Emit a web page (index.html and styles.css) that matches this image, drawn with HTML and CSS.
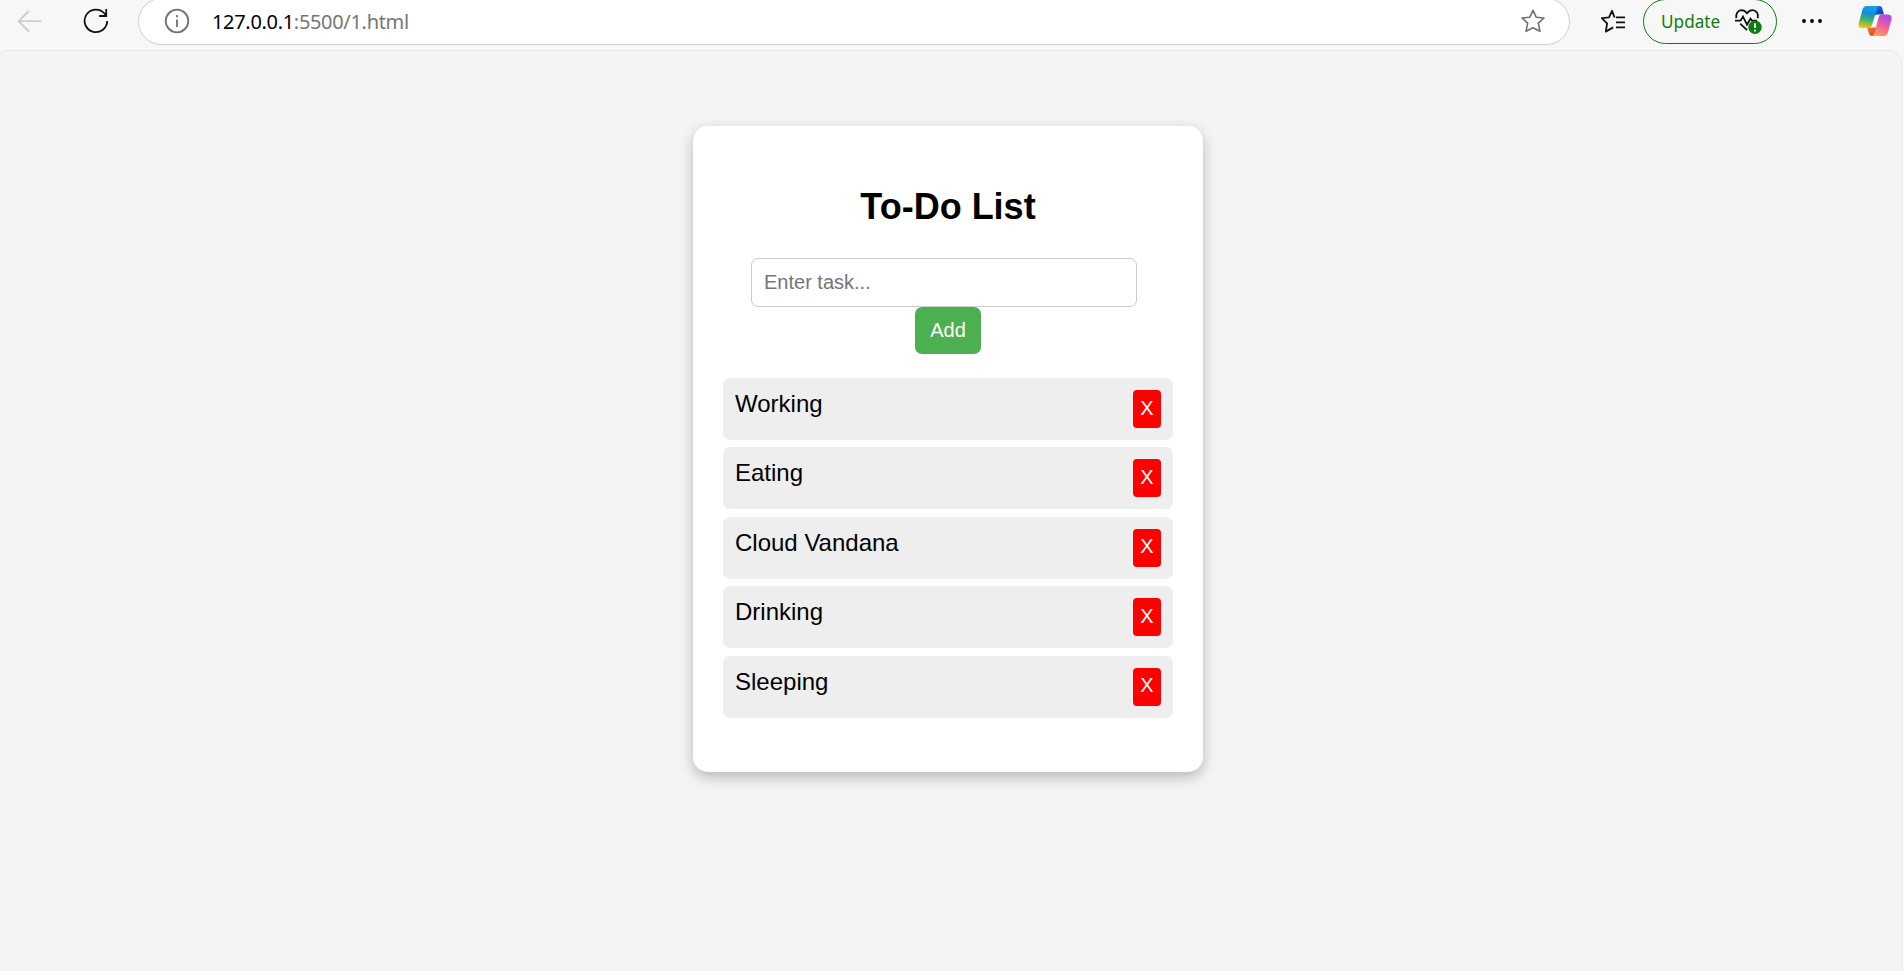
FILE: index.html
```html
<!DOCTYPE html>
<html lang="en">
<head>
<meta charset="utf-8">
<title>To-Do List</title>
<link rel="stylesheet" href="styles.css">
</head>
<body>
<header class="toolbar">
  <svg class="icon back" width="26" height="24" viewBox="0 0 26 24"><path d="M24.5 12.2H1.5M12 2 1.5 12.2 12 22.5"/></svg>
  <svg class="icon reload" width="26" height="26" viewBox="0 0 26 26"><path d="M24.2 13A11.3 11.3 0 1 1 21.5 5.5L23 7.6M23.2 1v7h-7"/></svg>
  <div class="address">
    <svg class="icon info" width="26" height="26" viewBox="0 0 26 26"><circle cx="13" cy="13" r="11.3"/><path d="M13 11.5V19M13 7v2.2"/></svg>
    <span class="url"><span class="host">127.0.0.1</span>:5500/1.html</span>
    <svg class="icon star" width="26" height="26" viewBox="0 0 26 26"><path d="M13 2.3 16.2 9.2 24 10 18.3 15.2 20 23.3 13 19.8 6 23.3 7.7 15.2 2 10 9.8 9.2Z"/></svg>
  </div>
  <svg class="icon favorites" width="26" height="26" viewBox="0 0 26 26"><path d="M14.6 9.5 12 2.8 9 9.3 1.8 10.2 7.1 15.4 5.8 23.6 13.2 19.4M16 9.3H25M16 14.3H25M16 19.3H25"/></svg>
  <div class="update">
    <span class="update-label">Update</span>
    <svg class="icon heart" width="30" height="28" viewBox="0 0 30 28"><path d="M2.3 10.2C1.5 5.5 4 2.3 7.5 2.2c2.6 0 4.3 1.5 5.5 3 1.2-1.5 2.9-3 5.5-3 3.7 0 6.3 3.5 5.3 8M1 12.7h5.5l2.500-4 4 8 3.500-6 1.500 2h5M6.200 15.600l6.800 6.600"/><circle class="badge" cx="21" cy="19.200" r="6.700"/><path class="mark" d="M21 15.200v4.700M21 21.800v1.600"/></svg>
  </div>
  <svg class="dots" width="22" height="6" viewBox="0 0 22 6"><circle cx="3" cy="3" r="1.900"/><circle cx="11" cy="3" r="1.900"/><circle cx="19" cy="3" r="1.900"/></svg>
  <svg class="copilot" width="34" height="32" viewBox="0 0 34 32">
    <defs>
      <linearGradient id="cool" x1="0.500" y1="0" x2="0.300" y2="1"><stop offset="0" stop-color="#16a1ec"/><stop offset=".35" stop-color="#0e8fd0"/><stop offset=".65" stop-color="#4ab565"/><stop offset="1" stop-color="#f5cb08"/></linearGradient>
      <linearGradient id="blue" x1="0" y1="0" x2="1" y2="1"><stop offset="0" stop-color="#1b6ae8"/><stop offset="1" stop-color="#173cbc"/></linearGradient>
      <linearGradient id="warm" x1="0.700" y1="0" x2="0.300" y2="1"><stop offset="0" stop-color="#a94ce8"/><stop offset=".45" stop-color="#e95aa5"/><stop offset="1" stop-color="#ff9d55"/></linearGradient>
      <linearGradient id="ember" x1="0" y1="0" x2="1" y2="1"><stop offset="0" stop-color="#f97b3d"/><stop offset="1" stop-color="#d93a35"/></linearGradient>
    </defs>
    <path fill="url(#blue)" d="M16 1h5.500c1.500 0 2.400 1 2.800 2.500L26 9.500h-6.500l-5 1z"/>
    <path fill="url(#ember)" d="M9 22.500h9.500L16 31h-2c-1.800 0-2.700-1-3.200-3z"/>
    <path fill="url(#cool)" d="M8.500 1H22c-1.700.2-2.500 1.300-3.100 3.200L14 20c-.7 2-1.500 3-3.500 3H4c-3 0-4-2-3.200-5L4.500 4.500C5.200 2.200 6.500 1 8.500 1z"/>
    <path fill="url(#warm)" d="M23 9.500h7c3 0 4.200 2 3.500 5l-3.600 13c-.7 2.300-2.200 3.500-4.300 3.500H13.500c1.600-.3 2.500-1.500 3-3.200l4-15c.5-2 1-3 2.500-3.300z"/>
  </svg>
</header>
<main class="page">
  <section class="card">
    <h2 class="title">To-Do List</h2>
    <input class="task-input" type="text" placeholder="Enter task...">
    <button class="add">Add</button>
    <ul class="tasks">
      <li class="task"><span>Working</span><button class="remove">X</button></li>
      <li class="task"><span>Eating</span><button class="remove">X</button></li>
      <li class="task"><span>Cloud Vandana</span><button class="remove">X</button></li>
      <li class="task"><span>Drinking</span><button class="remove">X</button></li>
      <li class="task"><span>Sleeping</span><button class="remove">X</button></li>
    </ul>
  </section>
</main>
</body>
</html>
```
FILE: styles.css
```css
* { box-sizing: border-box; }
body {
  margin: 0;
  height: 971px;
  overflow: hidden;
  display: flex;
  flex-direction: column;
  background: #f7f7f7;
  font-family: "Liberation Sans", Arial, sans-serif;
}
.toolbar {
  flex: none;
  display: flex;
  align-items: center;
  height: 50px;
  padding: 0 12px 8px 17px;
  font-family: "Noto Sans", sans-serif;
}
.toolbar svg { flex: none; }
.icon { fill: none; stroke: #111; stroke-width: 1.8; }
.back { stroke: #cdcdcd; margin-right: 40px; }
.address {
  flex: none;
  display: flex;
  align-items: center;
  width: 1432px;
  height: 47px;
  margin-left: 29px;
  padding: 0 23px 0 25px;
  border: 1.5px solid #cfcfcf;
  border-radius: 24px;
  background: #fff;
}
.info, .star { stroke: #707070; }
.star { stroke-width: 1.6; stroke-linejoin: round; }
.url {
  flex: 1;
  margin-left: 22px;
  color: #767676;
  font-size: 20px;
  letter-spacing: -0.32px;
}
.host { color: #000; }
.favorites { margin-left: 30px; stroke-linejoin: round; }
.update {
  display: flex;
  align-items: center;
  flex: none;
  width: 134px;
  height: 45px;
  margin-left: 17px;
  padding-left: 17px;
  border: 1.5px solid #107c10;
  border-radius: 23px;
}
.update-label { width: 59px; color: #107c10; font-size: 17.2px; }
.heart { margin: 2px 0 0 14px; }
.badge { fill: #107c10; stroke: none; }
.mark { stroke: #fff; }
.dots { margin-left: 24px; fill: #000; }
.copilot { margin-left: 35px; }
.page {
  flex: 1;
  margin-right: 2px;
  padding: 75px 0 0 693px;
  border: 1px solid #e8e8e8;
  border-width: 1px 1px 0 0;
  border-radius: 7px 14px 0 0;
  background: #f4f4f4;
}
.card {
  display: flex;
  flex-direction: column;
  align-items: center;
  width: 510px;
  height: 646px;
  padding: 60px 30px 0;
  border-radius: 15px;
  background: #fff;
  box-shadow: 0 5px 14px rgba(0, 0, 0, .25);
}
.title { margin: 0 0 31px; font-size: 36px; line-height: 41px; }
.task-input {
  width: 386px;
  height: 49px;
  margin-right: 8px;
  padding: 0 12px;
  border: 1px solid #ccc;
  border-radius: 7px;
  font: 20px "Liberation Sans", Arial, sans-serif;
}
.task-input::placeholder { color: #757575; }
.add {
  width: 66px;
  height: 47px;
  padding: 0;
  border: 0;
  border-radius: 7px;
  background: #4caf50;
  color: #fff;
  font: 20px "Liberation Sans", Arial, sans-serif;
}
.tasks {
  display: flex;
  flex-direction: column;
  gap: 7.4px;
  width: 100%;
  margin: 24px 0 0;
  padding: 0;
  list-style: none;
}
.task {
  display: flex;
  justify-content: space-between;
  height: 62px;
  padding: 12px;
  border-radius: 7px;
  background: #eee;
  font-size: 24px;
  line-height: 27px;
}
.remove {
  width: 28px;
  height: 38px;
  padding: 0 0 2px;
  border: 0;
  border-radius: 4px;
  background: #f00;
  color: #fff;
  font: 20px "Liberation Sans", Arial, sans-serif;
}
```
